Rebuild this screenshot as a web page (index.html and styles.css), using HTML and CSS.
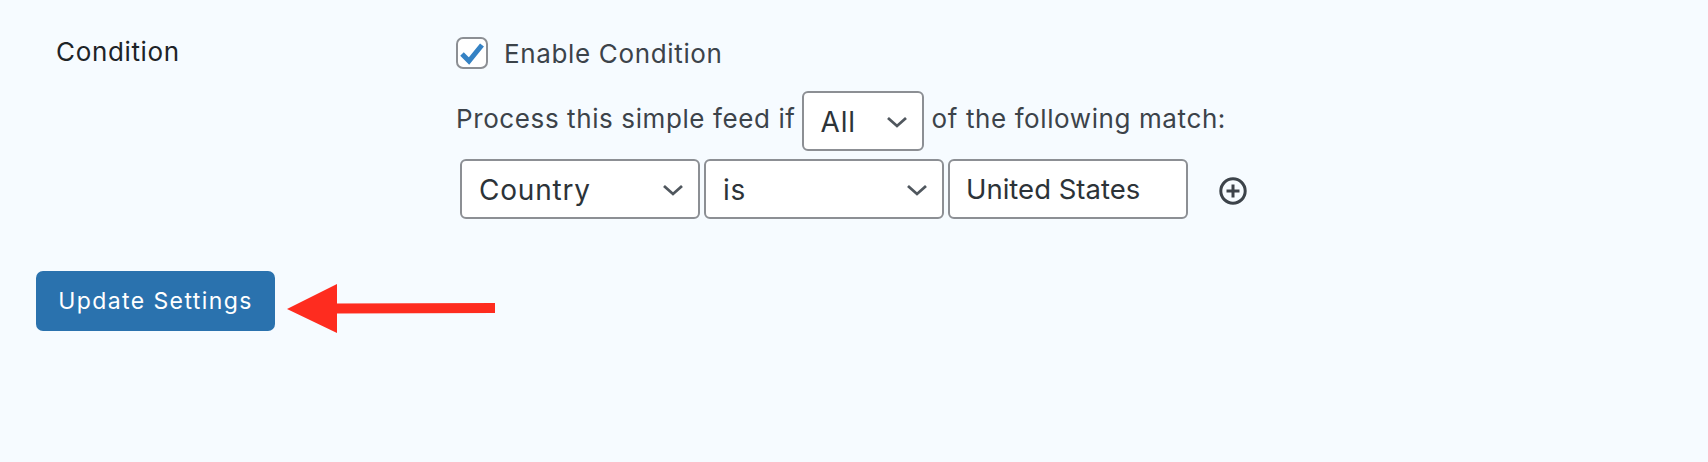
FILE: index.html
```html
<!DOCTYPE html>
<html lang="en">
<head>
<meta charset="utf-8">
<title>Condition settings</title>
<link rel="stylesheet" href="styles.css">
</head>
<body>
<main class="page">
  <section class="setting">
    <div class="setting-label">Condition</div>
    <div class="setting-body">
      <label class="enable">
        <span class="checkbox">
          <svg viewBox="0 0 28 28" width="28" height="28"><path d="M4 15 L11 22 L24 6" fill="none" stroke="#3582c4" stroke-width="5"/></svg>
        </span>
        <span class="enable-text">Enable Condition</span>
      </label>
      <div class="process">
        <span class="process-text">Process this simple feed if</span>
        <div class="control select select-all"><span>All</span><svg class="chev" viewBox="0 0 22 12" width="22" height="12"><path d="M2 2 L11 10 L20 2" fill="none" stroke="#50575e" stroke-width="2.8"/></svg></div>
        <span class="process-text">of the following match:</span>
      </div>
      <div class="rule">
        <div class="control select"><span>Country</span><svg class="chev" viewBox="0 0 22 12" width="22" height="12"><path d="M2 2 L11 10 L20 2" fill="none" stroke="#50575e" stroke-width="2.8"/></svg></div>
        <div class="control select"><span>is</span><svg class="chev" viewBox="0 0 22 12" width="22" height="12"><path d="M2 2 L11 10 L20 2" fill="none" stroke="#50575e" stroke-width="2.8"/></svg></div>
        <div class="control text-input">United States</div>
        <svg class="add" viewBox="0 0 28 28" width="28" height="28"><circle cx="14" cy="14" r="12.2" fill="none" stroke="#3c434a" stroke-width="3"/><path d="M14 7.5 V20.5 M7.5 14 H20.5" stroke="#3c434a" stroke-width="3"/></svg>
      </div>
    </div>
  </section>
  <button class="submit" type="button">Update Settings</button>
</main>
<svg class="arrow" viewBox="0 0 210 50" width="210" height="50"><path d="M0 25 L50 0 L50 19.5 L208 19 L208 29 L50 29.5 L50 49 Z" fill="#fe2c1f"/></svg>
</body>
</html>
```
FILE: styles.css
```css
html, body {
  margin: 0;
  height: 100%;
}
body {
  background: #f6fbff;
  font-family: Inter, "Liberation Sans", sans-serif;
  color: #3c434a;
  position: relative;
  overflow: hidden;
}
.page {
  padding: 37px 36px 0;
}
.setting {
  display: flex;
}
.setting-label {
  width: 400px;
  margin-left: 20px;
  font-size: 26px;
  letter-spacing: 0.65px;
  line-height: 30px;
  color: #1d2327;
}
.setting-body {
  display: flex;
  flex-direction: column;
  margin-left: -20px;
  padding-left: 20px;
}
.enable {
  display: flex;
  align-items: center;
  gap: 16px;
  font-size: 26px;
  letter-spacing: 0.65px;
  line-height: 31px;
  height: 31px;
}
.enable-text {
  margin-top: 2px;
}
.checkbox {
  width: 32px;
  height: 32px;
  box-sizing: border-box;
  border: 2px solid #8c8f94;
  border-radius: 7px;
  background: #fff;
  display: flex;
  align-items: center;
  justify-content: center;
}
.process {
  display: flex;
  align-items: center;
  gap: 8px;
  margin-top: 23px;
  font-size: 26px;
  letter-spacing: 0.6px;
}
.process-text {
  margin-bottom: 6px;
}
.control {
  box-sizing: border-box;
  height: 60px;
  background: #fff;
  border: 2px solid #8c8f94;
  border-radius: 6px;
  font-size: 28px;
  letter-spacing: 0;
  color: #2c3338;
  display: flex;
  align-items: center;
}
.select {
  width: 240px;
  padding: 2px 14px 0 17px;
  justify-content: space-between;
  letter-spacing: 0.8px;
}
.select-all {
  width: 122px;
  margin-left: -2px;
}
.text-input {
  width: 240px;
  padding: 0 16px;
  font-size: 27.5px;
}
.rule {
  display: flex;
  align-items: center;
  gap: 4px;
  margin-top: 8px;
  margin-left: 4px;
}
.add {
  margin-left: 27px;
  margin-top: 4px;
}
.submit {
  display: block;
  margin-top: 52px;
  width: 239px;
  height: 60px;
  border: 0;
  border-radius: 7px;
  background: #2a72ae;
  color: #fff;
  font-family: Inter, "Liberation Sans", sans-serif;
  font-size: 23px;
  letter-spacing: 1.4px;
}
.arrow {
  position: absolute;
  left: 287px;
  top: 284px;
}
```
